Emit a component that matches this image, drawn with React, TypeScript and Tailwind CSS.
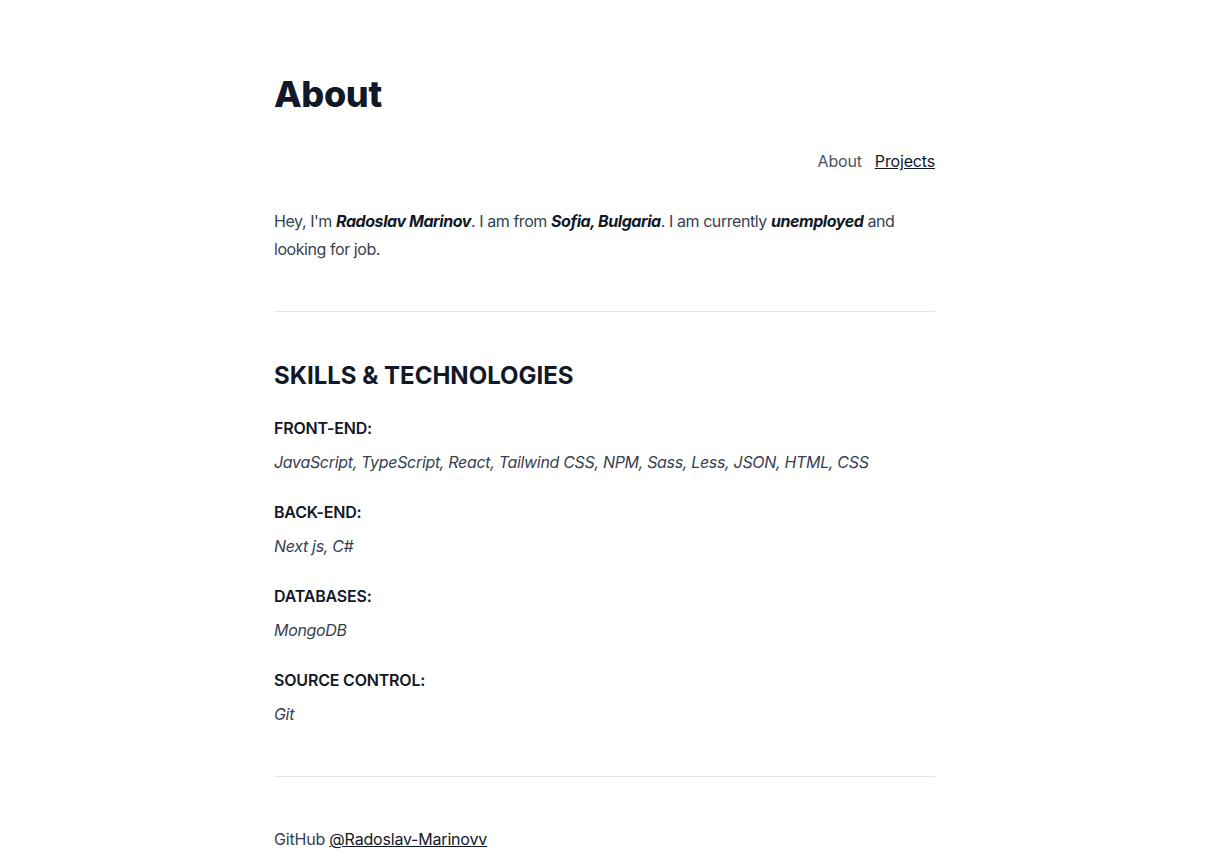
const skills = [
  {
    label: "FRONT-END:",
    items: "JavaScript, TypeScript, React, Tailwind CSS, NPM, Sass, Less, JSON, HTML, CSS",
  },
  { label: "BACK-END:", items: "Next js, C#" },
  { label: "DATABASES:", items: "MongoDB" },
  { label: "SOURCE CONTROL:", items: "Git" },
];

const App = () => {
  return (
    <div className="min-h-screen bg-white font-['Inter',sans-serif] text-[#374151]">
      <div className="flex justify-center pr-[23px]">
        <main className="w-[661px] pt-[74px] pb-10">
          {/* header */}
          <h1 className="text-4xl leading-10 font-extrabold tracking-[-0.01em] text-[#111827]">About</h1>
          <nav className="mt-[35px] flex justify-end gap-[13px] text-base leading-6 tracking-[-0.01em]">
            <a href="#" className="text-[#4b5563]">
              About
            </a>
            <a href="#" className="text-[#111827] underline">
              Projects
            </a>
          </nav>

          {/* intro */}
          <p className="mt-[34px] text-base leading-7 tracking-[-0.027em]">
            Hey, I'm <strong className="font-bold italic text-[#111827]">Radoslav Marinov</strong>. I am from{" "}
            <strong className="font-bold italic text-[#111827]">Sofia, Bulgaria</strong>. I am currently{" "}
            <strong className="font-bold italic text-[#111827]">unemployed</strong> and looking for job.
          </p>

          <hr className="mt-12 border-[#e5e7eb]" />

          {/* skills */}
          <h2 className="mt-12 text-2xl leading-8 font-bold text-[#111827]">SKILLS &amp; TECHNOLOGIES</h2>
          <div className="mt-6 flex flex-col gap-6">
            {skills.map((s) => (
              <div key={s.label}>
                <h4 className="text-base leading-6 font-semibold tracking-[-0.012em] text-[#111827]">{s.label}</h4>
                <p className="mt-2 text-base leading-7 italic tracking-[-0.02em]">{s.items}</p>
              </div>
            ))}
          </div>

          <hr className="mt-12 border-[#e5e7eb]" />

          <p className="mt-12 text-base leading-7 tracking-[-0.012em]">
            GitHub{" "}
            <a href="#" className="text-[#111827] underline">
              @Radoslav-Marinovv
            </a>
          </p>
        </main>
      </div>
    </div>
  );
};

export default App;
